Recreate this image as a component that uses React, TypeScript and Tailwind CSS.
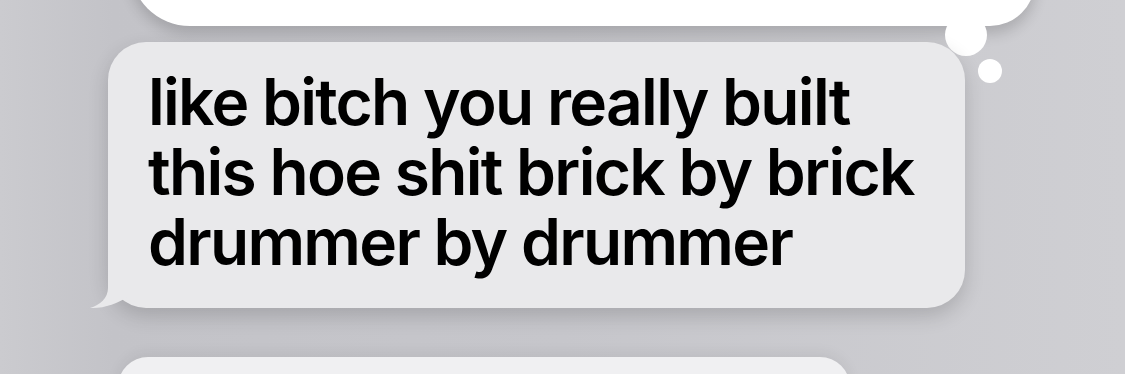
export default function App() {
  return (
    <div className="relative flex h-[374px] w-[1125px] flex-col overflow-hidden bg-[linear-gradient(90deg,#cbcbcf_0%,#c3c3c8_10%,#c6c6cb_50%,#cfcfd3_100%)]">
      {/* previous thought bubble, cut off at the top */}
      <div className="ml-[130px] mt-[-74px] h-[100px] w-[905px] shrink-0 rounded-bl-[60px] rounded-br-[45px] bg-white shadow-[0_8px_14px_rgba(0,0,0,0.16)]" />
      <div className="absolute left-[945px] top-[14px] h-[42px] w-[42px] rounded-full bg-white" />
      <div className="absolute left-[978px] top-[59px] h-[24px] w-[24px] rounded-full bg-white" />

      {/* main message */}
      <div className="relative ml-[108px] mt-[16px] h-[266px] w-[857px] shrink-0 rounded-[38px] bg-[#e9e9eb] pl-[40px] pt-[25px] shadow-[0_8px_20px_rgba(0,0,0,0.16)]">
        <svg
          className="absolute left-[-20px] top-[216px] overflow-visible"
          width="90"
          height="50"
          viewBox="0 0 90 50"
        >
          <path
            d="M 20 0 L 20 30 C 20 40, 12 47, 2 50 C 15 51, 30 45, 40 39 C 50 46, 62 50, 82 50 L 82 0 Z"
            fill="#e9e9eb"
          />
        </svg>
        <p className="relative font-['Inter',sans-serif] text-[64px] font-semibold leading-[70px] tracking-[-1.7px] text-black">
          like bitch you really built
          <br />
          this hoe shit brick by brick
          <br />
          drummer by drummer
        </p>
      </div>

      {/* next message, cut off at the bottom */}
      <div className="ml-[118px] mt-[49px] h-[60px] w-[732px] shrink-0 rounded-[36px] bg-[#f0f0f2] shadow-[0_-4px_14px_rgba(0,0,0,0.06)]" />
    </div>
  )
}
